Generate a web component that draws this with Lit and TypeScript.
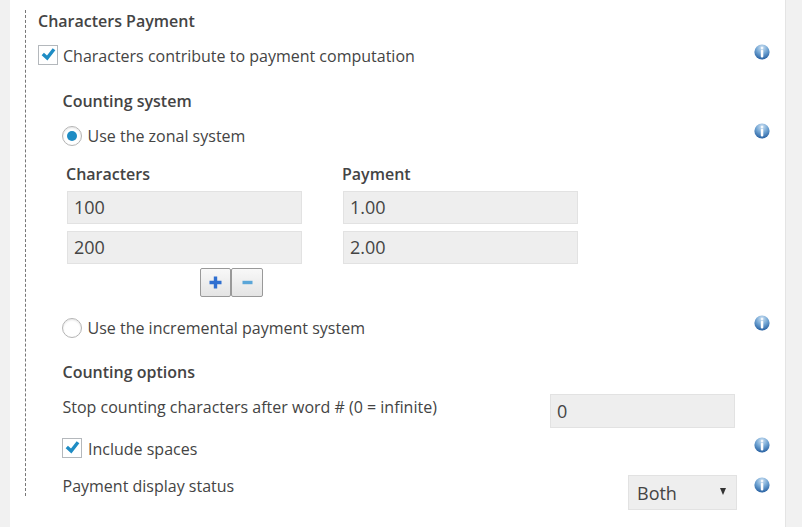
import { LitElement, html, css } from "lit";
import { customElement } from "lit/decorators.js";

@customElement("app-root")
export class AppRoot extends LitElement {
  static styles = css`
    :host { display: block; width: 802px; height: 527px; background: #f1f1f1; overflow: hidden;
      font-family: "Open Sans", sans-serif; font-size: 16px; color: #444; }
    .page { box-sizing: border-box; margin-left: 10px; width: 776px; height: 527px; background: #fff;
      border-right: 1px solid #e4e4e4; padding-top: 10px; }
    .tree { box-sizing: border-box; margin-left: 15px; width: 745px; height: 486px; padding-left: 12px;
      border-left: 1px dashed #777; display: flex; flex-direction: column; }
    .row { display: flex; align-items: center; }
    .grow { flex: 1; }
    .title { font-weight: 600; line-height: 22px; }
    .r1 { height: 26px; margin-top: 13px; }
    .inner { padding-left: 24.5px; display: flex; flex-direction: column; }
    .h2 { margin-top: 23px; }
    .r2 { height: 26px; margin-top: 11px; }
    .cols { display: flex; margin-top: 14px; padding-left: 4.5px; }
    .col { width: 276px; display: flex; flex-direction: column; }
    .lab { font-weight: 600; line-height: 22px; margin-left: -1px; margin-bottom: 6px; }
    .input { box-sizing: border-box; background: #eee; border: 1px solid #e2e2e2; height: 33px; width: 235px;
      padding: 0 6px; line-height: 31px; font-size: 18px; color: #444; margin-bottom: 7px; }
    .btns { display: flex; padding-left: 137.5px; margin-top: -3px; }
    .btn { box-sizing: border-box; width: 31px; height: 29px; border: 1px solid #999; border-radius: 2px;
      background: linear-gradient(#f8f8f8, #e4e4e4); display: flex; align-items: center; justify-content: center; }
    .btn.wide { width: 32px; }
    .r3 { height: 26px; margin-top: 18px; }
    .h3 { margin-top: 20px; }
    .r4 { height: 34px; margin-top: 11px; align-items: flex-start; }
    .r4 .txt { margin-top: 2px; }
    .stop { width: 185px; height: 34px; margin: 0 35px 0 0; line-height: 32px; }
    .r5 { height: 26px; margin-top: 8px; }
    .r5 .box { margin-left: -0.5px; margin-right: 6px; }
    .r6 { height: 36px; margin-top: 13px; align-items: flex-start; }
    .r6 .txt { line-height: 22px; }
    .sel { box-sizing: border-box; width: 109px; height: 35px; background: #eee; border: 1px solid #e2e2e2;
      display: flex; align-items: center; padding: 0 10px 0 8px; font-size: 18px; color: #444;
      justify-content: space-between; margin-right: 17px; }
    .arrow { width: 0; height: 0; border-left: 3.5px solid transparent; border-right: 3.5px solid transparent;
      border-top: 7px solid #333; margin-top: -3px; }
    .box { box-sizing: border-box; width: 20px; height: 20px; border: 1px solid #b4b8bc; background: #fff;
      margin: -2px 5px 0 0; display: flex; align-items: center; justify-content: center; flex: none; }
    .radio { box-sizing: border-box; width: 20px; height: 20px; border: 1px solid #b4b4b4; border-radius: 50%;
      margin: 0 5.5px 0 -0.5px; display: flex; align-items: center; justify-content: center; background: #fff; flex: none;
      box-shadow: inset 0 1px 2px #e4e4e4; }
    .dot { width: 10px; height: 10px; border-radius: 50%; background: #1e8cc4; }
    .info { flex: none; display: block; }
    .up8 { margin-top: -8px; }
    .up10 { margin-top: -10px; }
    .down2 { margin-top: 2px; }
  `;

  info(cls = "up8") {
    return html`<svg class="info ${cls}" width="16" height="16" viewBox="0 0 16 16">
      <defs>
        <radialGradient id="g" cx="50%" cy="22%" r="80%">
          <stop offset="0" stop-color="#cfe2f3"/><stop offset="0.5" stop-color="#6fa3d2"/><stop offset="1" stop-color="#235c9e"/>
        </radialGradient>
      </defs>
      <circle cx="8" cy="8" r="7.6" fill="url(#g)"/>
      <rect x="6.8" y="6" width="2.5" height="7.4" rx="0.8" fill="#fff"/>
      <rect x="6.9" y="2.8" width="2.3" height="2.6" rx="0.8" fill="#f4f8fc"/>
    </svg>`;
  }

  check() {
    return html`<svg width="18" height="18" viewBox="0 0 18 18">
      <path d="M3.8 8 L8.2 12 L15 3.2" fill="none" stroke="#1e8cc4" stroke-width="3.4"/>
    </svg>`;
  }

  render() {
    return html`<div class="page"><div class="tree">
      <div class="title">Characters Payment</div>
      <div class="row r1"><span class="box">${this.check()}</span><span>Characters contribute to payment computation</span><span class="grow"></span>${this.info()}</div>
      <div class="inner">
        <div class="title h2">Counting system</div>
        <div class="row r2"><span class="radio"><span class="dot"></span></span><span>Use the zonal system</span><span class="grow"></span>${this.info("up10")}</div>
        <div class="cols">
          <div class="col"><div class="lab">Characters</div><div class="input">100</div><div class="input">200</div></div>
          <div class="col"><div class="lab">Payment</div><div class="input">1.00</div><div class="input">2.00</div></div>
        </div>
        <div class="btns">
          <div class="btn"><svg width="13" height="13" viewBox="0 0 13 13"><path d="M6.5 0.5v12M0.5 6.5h12" stroke="#2f6fd0" stroke-width="3.4"/></svg></div>
          <div class="btn wide"><svg width="11" height="13" viewBox="0 0 11 13"><path d="M0.5 6.5h10" stroke="#5aa6d8" stroke-width="3.4"/></svg></div>
        </div>
        <div class="row r3"><span class="radio"></span><span>Use the incremental payment system</span><span class="grow"></span>${this.info("up10")}</div>
        <div class="title h3">Counting options</div>
        <div class="row r4"><span class="txt">Stop counting characters after word # (0 = infinite)</span><span class="grow"></span><div class="input stop">0</div></div>
        <div class="row r5"><span class="box">${this.check()}</span><span>Include spaces</span><span class="grow"></span>${this.info()}</div>
        <div class="row r6"><span class="txt">Payment display status</span><span class="grow"></span><div class="sel"><span>Both</span><span class="arrow"></span></div>${this.info("down2")}</div>
      </div>
    </div></div>`;
  }
}
